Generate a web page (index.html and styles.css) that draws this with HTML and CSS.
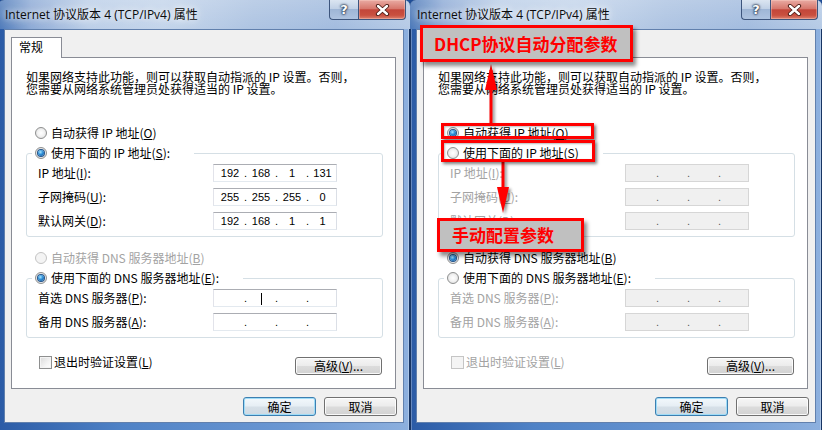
FILE: index.html
```html
<!DOCTYPE html>
<html lang="zh-CN">
<head>
<meta charset="utf-8">
<title>Internet 协议版本 4 (TCP/IPv4) 属性</title>
<link rel="stylesheet" href="styles.css">
</head>
<body>
<div class="screen">

  <!-- LEFT WINDOW: manual configuration -->
  <div class="window">
    <div class="titlebar">
      <span class="title">Internet 协议版本 4 (TCP/IPv4) 属性</span>
      <div class="caption">
        <span class="cap help">?</span>
        <span class="cap close"><svg width="15" height="12" viewBox="0 0 15 12"><path d="M3 2 L12 10 M12 2 L3 10" stroke="#4a1a14" stroke-width="4.2" stroke-linecap="round"/><path d="M3 2 L12 10 M12 2 L3 10" stroke="#fff" stroke-width="2.4" stroke-linecap="round"/></svg></span>
      </div>
    </div>
    <div class="client">
      <div class="tabs"><span class="tab">常规</span></div>
      <div class="panel">
        <p class="desc">如果网络支持此功能，则可以获取自动指派的 IP 设置。否则，<br>您需要从网络系统管理员处获得适当的 IP 设置。</p>
        <div class="opt first"><span class="radio"></span>自动获得 IP 地址(<u>O</u>)</div>
        <fieldset class="group">
          <legend class="opt"><span class="radio on"></span>使用下面的 IP 地址(<u>S</u>):</legend>
          <div class="row"><span class="lbl">IP 地址(<u>I</u>):</span><span class="ip"><span class="seg">192</span><span class="dot">.</span><span class="seg">168</span><span class="dot">.</span><span class="seg">1</span><span class="dot">.</span><span class="seg">131</span></span></div>
          <div class="row"><span class="lbl">子网掩码(<u>U</u>):</span><span class="ip"><span class="seg">255</span><span class="dot">.</span><span class="seg">255</span><span class="dot">.</span><span class="seg">255</span><span class="dot">.</span><span class="seg">0</span></span></div>
          <div class="row"><span class="lbl">默认网关(<u>D</u>):</span><span class="ip"><span class="seg">192</span><span class="dot">.</span><span class="seg">168</span><span class="dot">.</span><span class="seg">1</span><span class="dot">.</span><span class="seg">1</span></span></div>
        </fieldset>
        <div class="opt dns-first disabled"><span class="radio dis"></span>自动获得 DNS 服务器地址(<u>B</u>)</div>
        <fieldset class="group">
          <legend class="opt"><span class="radio on"></span>使用下面的 DNS 服务器地址(<u>E</u>):</legend>
          <div class="row"><span class="lbl">首选 DNS 服务器(<u>P</u>):</span><span class="ip"><span class="seg"></span><span class="dot">.</span><span class="seg"><span class="caret"></span></span><span class="dot">.</span><span class="seg"></span><span class="dot">.</span><span class="seg"></span></span></div>
          <div class="row"><span class="lbl">备用 DNS 服务器(<u>A</u>):</span><span class="ip"><span class="seg"></span><span class="dot">.</span><span class="seg"></span><span class="dot">.</span><span class="seg"></span><span class="dot">.</span><span class="seg"></span></span></div>
        </fieldset>
        <div class="foot">
          <span class="chk"><span class="box"></span>退出时验证设置(<u>L</u>)</span>
          <span class="btn adv">高级(<u>V</u>)...</span>
        </div>
      </div>
      <div class="actions">
        <span class="btn default">确定</span>
        <span class="btn">取消</span>
      </div>
    </div>
  </div>

  <!-- RIGHT WINDOW: DHCP, annotated -->
  <div class="window">
    <div class="titlebar">
      <span class="title">Internet 协议版本 4 (TCP/IPv4) 属性</span>
      <div class="caption">
        <span class="cap help">?</span>
        <span class="cap close"><svg width="15" height="12" viewBox="0 0 15 12"><path d="M3 2 L12 10 M12 2 L3 10" stroke="#4a1a14" stroke-width="4.2" stroke-linecap="round"/><path d="M3 2 L12 10 M12 2 L3 10" stroke="#fff" stroke-width="2.4" stroke-linecap="round"/></svg></span>
      </div>
    </div>
    <div class="client">
      <div class="tabs"><span class="tab">常规</span></div>
      <div class="panel">
        <p class="desc">如果网络支持此功能，则可以获取自动指派的 IP 设置。否则，<br>您需要从网络系统管理员处获得适当的 IP 设置。</p>
        <div class="opt first"><span class="radio on"></span>自动获得 IP 地址(<u>O</u>)</div>
        <fieldset class="group">
          <legend class="opt"><span class="radio"></span>使用下面的 IP 地址(<u>S</u>)</legend>
          <div class="row disabled"><span class="lbl">IP 地址(<u>I</u>):</span><span class="ip off"><span class="seg"></span><span class="dot">.</span><span class="seg"></span><span class="dot">.</span><span class="seg"></span><span class="dot">.</span><span class="seg"></span></span></div>
          <div class="row disabled"><span class="lbl">子网掩码(<u>U</u>):</span><span class="ip off"><span class="seg"></span><span class="dot">.</span><span class="seg"></span><span class="dot">.</span><span class="seg"></span><span class="dot">.</span><span class="seg"></span></span></div>
          <div class="row disabled"><span class="lbl">默认网关(<u>D</u>):</span><span class="ip off"><span class="seg"></span><span class="dot">.</span><span class="seg"></span><span class="dot">.</span><span class="seg"></span><span class="dot">.</span><span class="seg"></span></span></div>
        </fieldset>
        <div class="opt dns-first"><span class="radio on"></span>自动获得 DNS 服务器地址(<u>B</u>)</div>
        <fieldset class="group">
          <legend class="opt"><span class="radio"></span>使用下面的 DNS 服务器地址(<u>E</u>):</legend>
          <div class="row disabled"><span class="lbl">首选 DNS 服务器(<u>P</u>):</span><span class="ip off"><span class="seg"></span><span class="dot">.</span><span class="seg"></span><span class="dot">.</span><span class="seg"></span><span class="dot">.</span><span class="seg"></span></span></div>
          <div class="row disabled"><span class="lbl">备用 DNS 服务器(<u>A</u>):</span><span class="ip off"><span class="seg"></span><span class="dot">.</span><span class="seg"></span><span class="dot">.</span><span class="seg"></span><span class="dot">.</span><span class="seg"></span></span></div>
        </fieldset>
        <div class="foot">
          <span class="chk disabled"><span class="box dis"></span>退出时验证设置(<u>L</u>)</span>
          <span class="btn adv">高级(<u>V</u>)...</span>
        </div>
      </div>
      <div class="actions">
        <span class="btn default">确定</span>
        <span class="btn">取消</span>
      </div>
    </div>

    <!-- annotations -->
    <svg class="arrows" width="412" height="430" viewBox="0 0 412 430">
      <line x1="81" y1="70" x2="81" y2="123" stroke="#ff0000" stroke-width="3"/>
      <polygon points="81,64 75,90 87,90" fill="#ff0000"/>
      <line x1="93" y1="162" x2="93" y2="200" stroke="#ff0000" stroke-width="3"/>
      <polygon points="93,213 87,187 99,187" fill="#ff0000"/>
    </svg>
    <div class="hl hl-a"></div>
    <div class="hl hl-b"></div>
    <div class="note note-dhcp">DHCP协议自动分配参数</div>
    <div class="note note-manual">手动配置参数</div>
  </div>

</div>
</body>
</html>
```

FILE: styles.css
```css
* { box-sizing: border-box; }

html, body { margin: 0; padding: 0; }

body {
  width: 822px;
  height: 430px;
  overflow: hidden;
  background: #1f4d96;
  font-family: "Noto Sans CJK SC", "Noto Sans", sans-serif;
  font-size: 12px;
  color: #000;
}

.screen {
  display: flex;
  width: 824px;
  height: 430px;
  margin-left: -2px;
}

/* ---------- window frame ---------- */
.window {
  position: relative;
  flex: none;
  width: 412px;
  height: 438px;
  padding: 0 6px;
  display: flex;
  flex-direction: column;
  background: linear-gradient(90deg, #2b5ba6 0%, #4f82c6 30%, #6b97d2 70%, #8db0de 100%);
  box-shadow: inset 0 0 0 1px #173463, inset 0 0 0 2px rgba(255, 255, 255, 0.28);
  border-radius: 6px 6px 0 0;
}

.titlebar {
  flex: none;
  height: 29px;
  margin: 0 -6px;
  padding: 0 5px 0 7px;
  display: flex;
  justify-content: space-between;
  align-items: flex-start;
  border-radius: 6px 6px 0 0;
  background:
    linear-gradient(180deg, rgba(255, 255, 255, 0.18) 0%, rgba(255, 255, 255, 0) 100%),
    linear-gradient(90deg, #4c79b9 0%, #8eabd6 8%, #bccfe8 22%, #c4d5eb 40%, #aec4e2 62%, #a3bcdf 82%, #b6cbe6 100%);
}

.title {
  margin-top: 7px;
  line-height: 16px;
  font-family: "Open Sans", "Noto Sans CJK SC", sans-serif;
  font-size: 12px;
  color: #0b0b0b;
  text-shadow: 0 0 6px rgba(255, 255, 255, 0.95), 0 0 12px rgba(255, 255, 255, 0.8);
  letter-spacing: 0;
}

.caption {
  display: flex;
  margin-right: -1px;
}

.cap {
  height: 20px;
  display: flex;
  align-items: center;
  justify-content: center;
  border: 1px solid #3d557d;
  border-top: none;
}

.help {
  width: 29px;
  border-right: none;
  border-radius: 0 0 0 4px;
  background: linear-gradient(180deg, #dbe5f1 0%, #c1d1e6 45%, #9fb6d6 50%, #aec3e0 100%);
  color: #fff;
  font-family: "DejaVu Sans", sans-serif;
  font-weight: bold;
  font-size: 13px;
  text-shadow: 0 0 1px #1d2c46, 0 0 2px #1d2c46, 0 0 3px #1d2c46;
}

.close {
  width: 48px;
  border-radius: 0 0 4px 0;
  background: linear-gradient(180deg, #e9aba3 0%, #d7786d 45%, #c3463a 52%, #c9503f 80%, #dc8170 100%);
  box-shadow: inset 0 0 0 1px rgba(255, 220, 210, 0.35);
}

/* ---------- client area ---------- */
.client {
  flex: none;
  height: 394px;
  display: flex;
  flex-direction: column;
  background: #f0f0f0;
  border: 1px solid #6180ad;
}

.tabs {
  display: flex;
  margin: 7px 0 0 6px;
  height: 20px;
  position: relative;
  z-index: 1;
}

.tab {
  width: 51px;
  height: 21px;
  padding: 1px 0 0 7px;
  line-height: 16px;
  background: #fff;
  border: 1px solid #898c95;
  border-bottom: none;
}

.panel {
  height: 332px;
  margin: 0 0 0 6px;
  width: 385px;
  background: #fff;
  border: 1px solid #898c95;
  padding-top: 13px;
  display: flex;
  flex-direction: column;
}

.desc {
  margin: 0 0 0 14px;
  line-height: 12px;
  font-size: 12px;
  white-space: nowrap;
}

.opt {
  display: flex;
  align-items: center;
  height: 16px;
  line-height: 16px;
  white-space: nowrap;
}

.opt.first { margin: 30px 0 0 23px; }
.opt.dns-first { margin: 13px 0 0 23px; }

.radio {
  flex: none;
  width: 12px;
  height: 12px;
  margin-right: 4px;
  border-radius: 50%;
  border: 1px solid #8e8f8f;
  background: radial-gradient(circle at 50% 50%, #ffffff 0%, #f3f3f3 45%, #d5d5d5 100%);
  display: inline-flex;
  align-items: center;
  justify-content: center;
}

.radio.on::after {
  content: "";
  width: 6px;
  height: 6px;
  border-radius: 50%;
  background: radial-gradient(circle at 40% 35%, #a8e6ff 0%, #2e8fd8 45%, #0c4a8e 100%);
  box-shadow: 0 0 0 1px #21538a;
}

.radio.dis {
  border-color: #c4c4c4;
  background: #f4f4f4;
}

.disabled { color: #a3a3a3; }

/* group boxes */
.group {
  margin: 4px 0 0 14px;
  width: 357px;
  min-width: 0;
  padding: 3px 0 6px 11px;
  border: 1px solid #d5dfe5;
  border-radius: 3px;
}

.group legend {
  margin-left: -6px;
  padding: 0 24px 0 3px;
}

.row {
  display: flex;
  align-items: center;
  height: 18px;
  line-height: 16px;
  white-space: nowrap;
}

.row + .row { margin-top: 6px; }

.lbl {
  width: 175px;
  flex: none;
}

.ip {
  width: 124px;
  height: 18px;
  flex: none;
  display: flex;
  align-items: center;
  padding: 0 0 0 2px;
  border: 1px solid;
  border-color: #abadb3 #dbdfe6 #e3e9ef #e2e3ea;
  background: #fff;
  color: #000;
  font-family: "Liberation Sans", Arial, sans-serif;
  font-size: 11px;
  line-height: 16px;
}

.seg {
  width: 28px;
  flex: none;
  text-align: center;
}

.seg:last-child { flex: 1; width: auto; }

.dot {
  width: 3px;
  flex: none;
  text-align: center;
}

.ip.off {
  background: #f0f0f0;
  border-color: #d6d6d6;
  color: #5c5c5c;
}

.caret {
  display: inline-block;
  width: 1px;
  height: 12px;
  background: #000;
  vertical-align: middle;
}

/* footer row */
.foot {
  display: flex;
  justify-content: space-between;
  align-items: flex-start;
  margin: 19px 13px 0 27px;
}

.chk {
  display: flex;
  align-items: center;
  height: 14px;
  line-height: 14px;
  margin-top: -2px;
  white-space: nowrap;
}

.box {
  width: 13px;
  height: 13px;
  margin-right: 2px;
  border: 1px solid #8e8f8f;
  background: linear-gradient(135deg, #d9d9d9 0%, #f3f3f3 60%, #ffffff 100%);
  box-shadow: inset 0 0 0 1px #f4f4f4;
}

.box.dis {
  border-color: #c5c5c5;
  background: #f4f4f4;
  box-shadow: none;
}

.btn {
  display: flex;
  align-items: center;
  justify-content: center;
  height: 19px;
  width: 73px;
  line-height: 16px;
  border: 1px solid #707070;
  border-radius: 3px;
  background: linear-gradient(180deg, #f6f6f6 0%, #ececec 48%, #dcdcdc 52%, #d2d2d2 100%);
  box-shadow: inset 0 0 0 1px rgba(255, 255, 255, 0.85);
  white-space: nowrap;
}

.btn.adv {
  width: 87px;
  height: 18px;
}

.btn.default {
  border-color: #3c7fb1;
  box-shadow: inset 0 0 0 1px #9fdcf7;
  background: linear-gradient(180deg, #f2f8fc 0%, #e6eef4 48%, #d6e0e8 52%, #cfd9e2 100%);
}

.actions {
  display: flex;
  justify-content: flex-end;
  gap: 8px;
  margin: 8px 6px 0 0;
}

/* ---------- annotations (right window) ---------- */
.arrows {
  position: absolute;
  left: 0;
  top: 0;
  z-index: 5;
  pointer-events: none;
  filter: drop-shadow(2px 2px 1.5px rgba(0, 0, 0, 0.45));
}

.hl {
  position: absolute;
  z-index: 5;
  border: 3px solid #ff0000;
  box-shadow: 2px 2px 3px rgba(0, 0, 0, 0.5), inset 1px 1px 2px rgba(0, 0, 0, 0.25);
}

.hl-a { left: 31px; top: 123px; width: 153px; height: 16px; }
.hl-b { left: 31px; top: 140px; width: 154px; height: 22px; }

.note {
  position: absolute;
  z-index: 6;
  border: 3px solid #ff0000;
  background: #c0c0c0;
  color: #ff0000;
  font-family: "Noto Sans CJK SC", sans-serif;
  font-weight: bold;
  font-size: 17px;
  white-space: nowrap;
  box-shadow: 3px 4px 4px rgba(0, 0, 0, 0.45);
}

.note-dhcp {
  left: 10px;
  top: 25px;
  width: 213px;
  height: 37px;
  padding-left: 11px;
  line-height: 31px;
}

.note-manual {
  left: 27px;
  top: 218px;
  width: 147px;
  height: 34px;
  padding-left: 12px;
  line-height: 28px;
}
```
